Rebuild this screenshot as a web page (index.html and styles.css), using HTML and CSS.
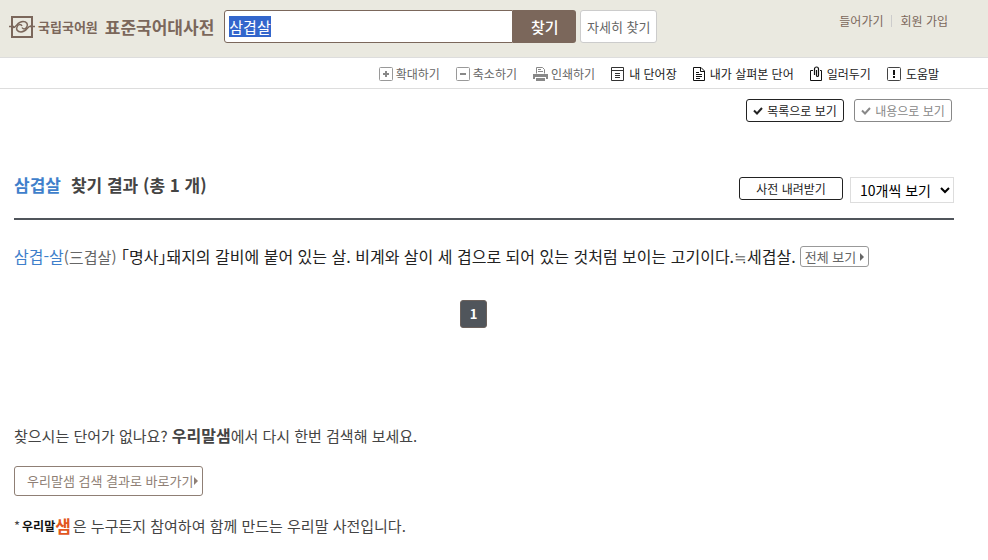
FILE: index.html
```html
<!DOCTYPE html>
<html lang="ko">
<head>
    <meta charset="UTF-8">
    <title>표준국어대사전</title>
    <link rel="stylesheet" href="styles.css">
</head>
<body>
    <!-- 상단 검색 영역 -->
    <header class="header">
        <a href="#" class="logo">
            <svg class="logo-mark" width="26" height="22" viewBox="0 0 26 22" fill="none" stroke="#7b675b">
                <rect x="3" y="1" width="20" height="20" stroke-width="2"/>
                <path d="M0 10.500h5M21 10.500h5" stroke-width="1.500"/>
                <path d="M4 11.500c4 0 4-6 10-6 4 0 5 3 4 5-1 3-4 3-5 1" stroke-width="1.500"/>
                <path d="M22 10c-4 0-4 6-10 6-4 0-5-3-4-5 1-3 4-3 5-1" stroke-width="1.500"/>
            </svg>
            <span class="logo-org">국립국어원</span>
            <span class="logo-name">표준국어대사전</span>
        </a>
        <form class="search" action="#">
            <input type="text" id="keyword" class="search-input" value="삼겹살" aria-label="검색어" autocomplete="off" spellcheck="false">
            <button type="submit" class="search-btn">찾기</button>
            <button type="button" class="detail-btn">자세히 찾기</button>
        </form>
        <nav class="member">
            <a href="#">들어가기</a>
            <a href="#">회원 가입</a>
        </nav>
    </header>

    <!-- 도구 모음 -->
    <nav class="tools">
        <button type="button" class="tool tool-gray">
            <svg width="14" height="14" viewBox="0 0 14 14" fill="none" stroke="#999"><rect x=".5" y=".5" width="13" height="13" rx="1"/><path d="M4 7h6M7 4v6" stroke="#888" stroke-width="2"/></svg>
            확대하기
        </button>
        <button type="button" class="tool tool-gray">
            <svg width="14" height="14" viewBox="0 0 14 14" fill="none" stroke="#999"><rect x=".5" y=".5" width="13" height="13" rx="1"/><path d="M4 7h6" stroke="#888" stroke-width="2"/></svg>
            축소하기
        </button>
        <button type="button" class="tool tool-gray">
            <svg width="15" height="14" viewBox="0 0 15 14" fill="none"><path d="M3.500 6.500v-6h6l2 2v4" stroke="#888"/><path d="M5 2.500h3M5 4.500h5" stroke="#888"/><path d="M0 7h15v5h-2v-2H2v2H0z" fill="#888"/><path d="M3 11h9v3H3z" fill="#888"/></svg>
            인쇄하기
        </button>
        <a href="#" class="tool">
            <svg width="13" height="14" viewBox="0 0 13 14" fill="none" stroke="#333"><path d="M.5.5h12v13H.5zM.5 3.500h12M4 6.500h5M4 8.500h5M4 10.500h5"/></svg>
            내 단어장
        </a>
        <a href="#" class="tool">
            <svg width="12" height="14" viewBox="0 0 12 14" fill="none" stroke="#111"><path d="M.5.5h7.500l3.500 3.500v9.500H.5z"/><path d="M7.500.5v4h4M3 5.500h3M3 7.500h6M3 9.500h6M3 11.500h4"/></svg>
            내가 살펴본 단어
        </a>
        <a href="#" class="tool">
            <svg width="12" height="15" viewBox="0 0 12 15" fill="none" stroke="#111"><path d="M3 4.500H.500v10h11v-10H10"/><path d="M4.500 9V3a2 2 0 0 1 4 0v6.500a1 1 0 0 1-2 0V4" stroke-width="1.200"/></svg>
            일러두기
        </a>
        <a href="#" class="tool">
            <svg width="14" height="14" viewBox="0 0 14 14" fill="none" stroke="#444"><rect x=".5" y=".5" width="13" height="13" rx="1"/><path d="M7 3v5M7 9v2" stroke="#111" stroke-width="2"/></svg>
            도움말
        </a>
    </nav>

    <main class="content">
        <div class="view-switch">
            <button type="button" class="btn btn-view">
                <svg width="10" height="8" viewBox="0 0 10 8" fill="none" stroke="currentColor" stroke-width="2"><path d="M1 3.500l3 3L9 1"/></svg>
                목록으로 보기
            </button>
            <button type="button" class="btn btn-view btn-off">
                <svg width="10" height="8" viewBox="0 0 10 8" fill="none" stroke="currentColor" stroke-width="2"><path d="M1 3.500l3 3L9 1"/></svg>
                내용으로 보기
            </button>
        </div>

        <div class="result-head">
            <h1 class="result-title"><span class="keyword">삼겹살</span>찾기 결과 (총 1 개)</h1>
            <button type="button" class="btn btn-download">사전 내려받기</button>
            <select class="page-size" aria-label="보기 개수">
                <option>10개씩 보기</option>
            </select>
        </div>

        <!-- 찾기 결과 -->
        <div class="result-item">
            <p class="definition"><a href="#" class="word">삼겹-살</a><span class="hanja">(三겹살)</span> <span class="pos">「명사」</span>돼지의 갈비에 붙어 있는 살. 비계와 살이 세 겹으로 되어 있는 것처럼 보이는 고기이다.≒세겹살.</p>
            <button type="button" class="btn btn-more">전체 보기
                <svg width="4" height="8" viewBox="0 0 4 8" fill="currentColor"><path d="M0 0l4 4-4 4z"/></svg>
            </button>
        </div>

        <div class="paging">
            <a href="#" class="page-current">1</a>
        </div>

        <!-- 우리말샘 안내 -->
        <section class="guide">
            <p>찾으시는 단어가 없나요? <strong>우리말샘</strong>에서 다시 한번 검색해 보세요.</p>
            <a href="#" class="guide-link">우리말샘 검색 결과로 바로가기
                <svg width="4" height="8" viewBox="0 0 4 8" fill="currentColor"><path d="M0 0l4 4-4 4z"/></svg>
            </a>
            <p class="guide-note"><span class="star">*</span><span class="saem-logo">우리말<em>샘</em></span>은 누구든지 참여하여 함께 만드는 우리말 사전입니다.</p>
        </section>
    </main>

    <script>
        // 검색어 전체 선택
        var keyword = document.getElementById('keyword');
        keyword.focus();
        keyword.select();
    </script>
</body>
</html>
```
FILE: styles.css
```css
:root {
    --brown: #7b675b;
    --blue: #3f7fcb;
    --dark: #50555b;
}

* {
    margin: 0;
    padding: 0;
    box-sizing: border-box;
}

body {
    background: #fff;
    color: #222;
    font-family: 'Noto Sans CJK KR', sans-serif;
    font-size: 12px;
    line-height: 18px;
}

a {
    color: inherit;
    text-decoration: none;
}

button,
input,
select {
    font-family: inherit;
    cursor: pointer;
}

svg {
    flex: none;
}

/* 상단 */
.header {
    display: flex;
    align-items: flex-start;
    padding: 10px 40px 13px 9px;
    background: #eae9e0;
    border-bottom: 1px solid #ddd;
}

.logo {
    display: flex;
    align-items: center;
    height: 34px;
    color: var(--brown);
    font-weight: 700;
    white-space: nowrap;
}

.logo-org {
    margin: 0 7px 0 3px;
    font-size: 13px;
}

.logo-name {
    font-size: 17px;
}

.search {
    display: flex;
    height: 33px;
    margin-left: 10px;
}

.search-input {
    width: 289px;
    padding: 0 4px;
    border: 1px solid var(--brown);
    border-radius: 3px 0 0 3px;
    background: #fff;
    font-size: 15px;
    outline: none;
    cursor: text;
}

.search-input::selection {
    background: #36c;
    color: #fff;
}

.search-btn {
    width: 63px;
    margin-right: 4px;
    border: none;
    border-radius: 0 3px 3px 0;
    background: var(--brown);
    color: #fff;
    font-size: 15px;
    font-weight: 500;
}

.detail-btn {
    width: 77px;
    border: 1px solid #ccc;
    border-radius: 3px;
    background: #fff;
    color: #666;
    font-size: 13px;
}

.member {
    display: flex;
    align-items: center;
    margin: 2px 0 0 auto;
    color: var(--brown);
    line-height: 18px;
    white-space: nowrap;
}

.member a + a {
    display: flex;
    align-items: center;
}

.member a + a::before {
    content: "";
    height: 12px;
    margin: 0 8px;
    border-left: 1px solid #ccc;
}

/* 도구 모음 */
.tools {
    display: flex;
    justify-content: flex-end;
    align-items: center;
    gap: 16px;
    height: 31px;
    padding: 1px 49px 0 0;
    border-bottom: 1px solid #ddd;
}

.tool {
    display: flex;
    align-items: center;
    gap: 5px;
    border: none;
    background: none;
    color: #222;
    font-size: 12px;
    line-height: 18px;
    white-space: nowrap;
}

.tool-gray {
    gap: 3px;
    color: #666;
}

/* 본문 */
.content {
    padding: 10px 34px 20px 14px;
}

.btn {
    display: flex;
    justify-content: center;
    align-items: center;
    height: 23px;
    border: 1px solid #222;
    border-radius: 3px;
    background: #fff;
    color: #222;
    font-size: 12px;
    white-space: nowrap;
}

.view-switch {
    display: flex;
    justify-content: flex-end;
    gap: 10px;
    padding-right: 2px;
}

.btn-view {
    gap: 4px;
    width: 98px;
}

.btn-off {
    border-color: #888;
    color: #888;
}

.result-head {
    display: flex;
    align-items: flex-start;
    margin-top: 48px;
    padding: 7px 0 15px;
    border-bottom: 2px solid var(--dark);
}

.result-title {
    margin-right: auto;
    color: #444;
    font-size: 17px;
    line-height: 16px;
}

.keyword {
    margin-right: 10px;
    color: var(--blue);
}

.btn-download {
    width: 104px;
    margin-right: 7px;
}

.page-size {
    width: 104px;
    height: 26px;
    padding: 0 5px;
    border: 1px solid #ddd;
    background: #fff;
    color: #000;
    font-size: 14px;
}

.result-item {
    display: flex;
    align-items: center;
    gap: 4px;
    margin-top: 24px;
}

.definition {
    font-size: 16px;
    line-height: 24px;
}

.word {
    color: var(--blue);
}

.hanja {
    color: #666;
    font-size: 15px;
}

.pos {
    font-feature-settings: "halt";
}

.btn-more {
    gap: 4px;
    height: 21px;
    padding: 0 4px;
    border-color: #999;
    color: #666;
    font-size: 13px;
}

.paging {
    display: flex;
    justify-content: center;
    margin-top: 31px;
    padding-right: 21px;
}

.page-current {
    width: 27px;
    height: 28px;
    border: 1px solid #6b615c;
    border-radius: 3px;
    background: var(--dark);
    color: #fff;
    font-size: 13px;
    font-weight: 700;
    line-height: 26px;
    text-align: center;
}

/* 우리말샘 안내 */
.guide {
    margin-top: 95px;
    color: #444;
    font-size: 15px;
    line-height: 24px;
}

.guide strong {
    font-size: 16px;
}

.guide-link {
    display: inline-flex;
    align-items: center;
    gap: 1px;
    height: 30px;
    margin: 18px 0;
    padding: 0 4px 0 12px;
    border: 1px solid #8f7f75;
    border-radius: 3px;
    color: #8f7f75;
    font-size: 13px;
}

.guide-note {
    display: flex;
    align-items: center;
}

.star {
    font-size: 13px;
}

.saem-logo {
    display: flex;
    align-items: center;
    margin: 0 2px;
    color: #111;
    font-size: 12px;
    font-weight: 700;
}

.saem-logo em {
    color: #e2571e;
    font-size: 17px;
    font-style: normal;
}
```
